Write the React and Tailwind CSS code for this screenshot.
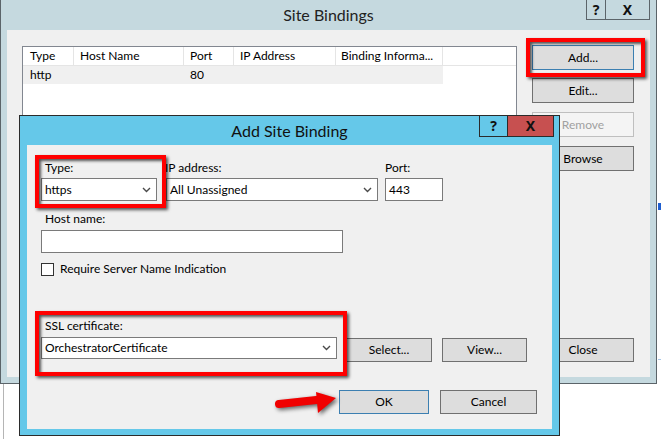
import React from "react";

function Chevron() {
    return (
        <svg width="9" height="6" viewBox="0 0 9 6" className="shrink-0">
            <path d="M1 1 L4.5 4.5 L8 1" fill="none" stroke="#4a4a4a" strokeWidth="1.4" />
        </svg>
    );
}

function WinButton({ children, className = "", disabled, focused }) {
    const tone = disabled
        ? "bg-[#f4f4f4] border-[#bfbfbf] text-[#a0a0a0]"
        : focused
            ? "bg-[#dddddd] border-[#3c7fb1] text-black"
            : "bg-[#dddddd] border-[#707070] text-black";
    return (
        <div className={`flex items-center justify-center border ${tone} ${className}`}>
            {children}
        </div>
    );
}

function Dropdown({ value, className = "" }) {
    return (
        <div className={`flex items-center justify-between bg-white border border-[#7a7a7a] pl-[3px] pr-[5px] ${className}`}>
            <span>{value}</span>
            <Chevron />
        </div>
    );
}

function RedBox({ className = "" }) {
    return (
        <div
            className={`absolute border-[4px] border-[#ff0000] shadow-[2px_2px_3px_rgba(0,0,0,0.65),inset_2px_2px_3px_rgba(0,0,0,0.65)] pointer-events-none ${className}`}
        />
    );
}

export default function App() {
    const columns = [
        { name: "Type", w: "w-[51px]", pad: "pl-[7px]" },
        { name: "Host Name", w: "w-[110px]", pad: "pl-[6px]" },
        { name: "Port", w: "w-[50px]", pad: "pl-[6px]" },
        { name: "IP Address", w: "w-[102px]", pad: "pl-[6px]" },
        { name: "Binding Informa...", w: "w-[107px]", pad: "pl-[5px]" },
    ];

    return (
        <div className="relative w-[661px] h-[439px] bg-white overflow-hidden font-['Lato',sans-serif] text-[12px] leading-[16px] text-black">
            {/* bits of the desktop to the right */}
            <div className="absolute left-[658px] top-[203px] w-[3px] h-[7px] bg-[#1f5fd0]" />
            <div className="absolute left-[658px] top-[359px] w-[3px] h-[1px] bg-[#a8c8e8]" />
            <div className="absolute left-[3px] top-[384px] w-[1px] h-[55px] bg-[#b5b5b5]" />

            {/* Site Bindings window */}
            <div className="w-[657px] h-[384px] border-x border-b border-[#5b6469] bg-[#c5d9df] px-[6px] pb-[6px] flex flex-col">
                <div className="relative h-[30px] shrink-0 flex items-center justify-center text-[16px] text-[#222]">
                    Site Bindings
                    <div className="absolute top-0 right-0 flex h-[20px] text-[#111] font-['Noto_Sans',sans-serif]">
                        <div className="w-[19px] border-l border-b border-[#5b6469] flex items-center justify-center font-bold text-[14px]">?</div>
                        <div className="w-[45px] border-x border-b border-[#5b6469] flex items-center justify-center font-bold text-[14px]">X</div>
                    </div>
                </div>
                <div className="relative flex-1 bg-[#f0f0f0] flex pt-[15px] pl-[15px]">
                    <div className="mt-[1px] w-[495px] h-[320px] bg-white border border-[#828790]">
                        <div className="flex h-[19px] border-b border-[#e5e5e5]">
                            {columns.map(c => (
                                <div key={c.name} className={`${c.w} ${c.pad} border-r border-[#e5e5e5] flex items-center whitespace-nowrap`}>
                                    {c.name}
                                </div>
                            ))}
                        </div>
                        <div className="flex h-[18px] w-[420px] bg-[#f0f0f0]">
                            <div className="w-[51px] pl-[7px] flex items-center">http</div>
                            <div className="w-[110px]" />
                            <div className="w-[50px] pl-[6px] flex items-center">80</div>
                        </div>
                    </div>
                    <div className="ml-[15px] w-[102px] flex flex-col">
                        <WinButton focused className="h-[25px]">Add...</WinButton>
                        <WinButton className="h-[25px] mt-[8px]">Edit...</WinButton>
                        <WinButton disabled className="h-[25px] mt-[9px]">Remove</WinButton>
                        <WinButton className="h-[25px] mt-[9px]">Browse</WinButton>
                        <WinButton className="h-[24px] mt-[167px]">Close</WinButton>
                    </div>
                    <RedBox className="left-[519px] top-[8px] w-[119px] h-[39px]" />
                </div>
            </div>

            {/* Add Site Binding dialog */}
            <div className="absolute left-[19px] top-[115px] w-[541px] h-[321px] border border-[#2b2b2b] bg-[#65c8e9] pl-[7px] pb-[6px] flex flex-col">
                <div className="relative h-[29px] shrink-0 flex items-center justify-center text-[16px] text-[#111] pr-[7px]">
                    Add Site Binding
                    <div className="absolute top-0 right-[5px] flex h-[21px] font-['Noto_Sans',sans-serif]">
                        <div className="w-[29px] border-x border-b border-[#2b2b2b] flex items-center justify-center font-bold text-[14px] text-[#111]">?</div>
                        <div className="w-[46px] border-r border-b border-[#2b2b2b] bg-[#c75050] flex items-center justify-center font-bold text-[14px] text-[#111]">X</div>
                    </div>
                </div>
                <div className="relative w-[525px] flex-1 bg-[#f0f0f0] pl-[14px] pt-[15px] flex flex-col">
                    <div className="flex">
                        <div className="w-[116px]">
                            <div className="pl-[4px] mb-[2px]">Type:</div>
                            <Dropdown value="https" className="h-[23px]" />
                        </div>
                        <div className="w-[212px] ml-[9px]">
                            <div className="mb-[2px] -ml-[1px]">IP address:</div>
                            <Dropdown value="All Unassigned" className="h-[23px]" />
                        </div>
                        <div className="w-[58px] ml-[7px]">
                            <div className="mb-[2px]">Port:</div>
                            <div className="h-[23px] bg-white border border-[#7a7a7a] pl-[3px] flex items-center">443</div>
                        </div>
                    </div>
                    <div className="pl-[4px] mt-[10px] mb-[3px]">Host name:</div>
                    <div className="w-[302px] h-[23px] bg-white border border-[#7a7a7a]" />
                    <div className="flex items-center h-[16px] mt-[8px]">
                        <div className="w-[13px] h-[13px] bg-white border border-[#333]" />
                        <span className="ml-[6px]">Require Server Name Indication</span>
                    </div>
                    <div className="pl-[4px] mt-[41px] mb-[3px]">SSL certificate:</div>
                    <div className="flex items-start">
                        <Dropdown value="OrchestratorCertificate" className="w-[296px] h-[22px]" />
                        <WinButton className="w-[86px] h-[24px] ml-[9px] mt-[1px]">Select...</WinButton>
                        <WinButton className="w-[85px] h-[24px] ml-[10px] mt-[1px]">View...</WinButton>
                    </div>
                    <div className="flex justify-end pr-[15px] mt-[28px]">
                        <WinButton focused className="w-[90px] h-[24px]">OK</WinButton>
                        <WinButton className="w-[97px] h-[24px] ml-[11px]">Cancel</WinButton>
                    </div>

                    <RedBox className="left-[8px] top-[10px] w-[131px] h-[53px]" />
                    <RedBox className="left-[8px] top-[166px] w-[312px] h-[65px]" />

                    <svg
                        width="66"
                        height="28"
                        viewBox="0 0 66 28"
                        className="absolute left-[246px] top-[243px] drop-shadow-[2px_2px_2px_rgba(0,0,0,0.6)]"
                    >
                        <path d="M6 16 L48 11.5" stroke="#f00000" strokeWidth="8" strokeLinecap="round" />
                        <path d="M43 4 L63 10 L45 25 Z" fill="#f00000" />
                    </svg>
                </div>
            </div>
        </div>
    );
}
